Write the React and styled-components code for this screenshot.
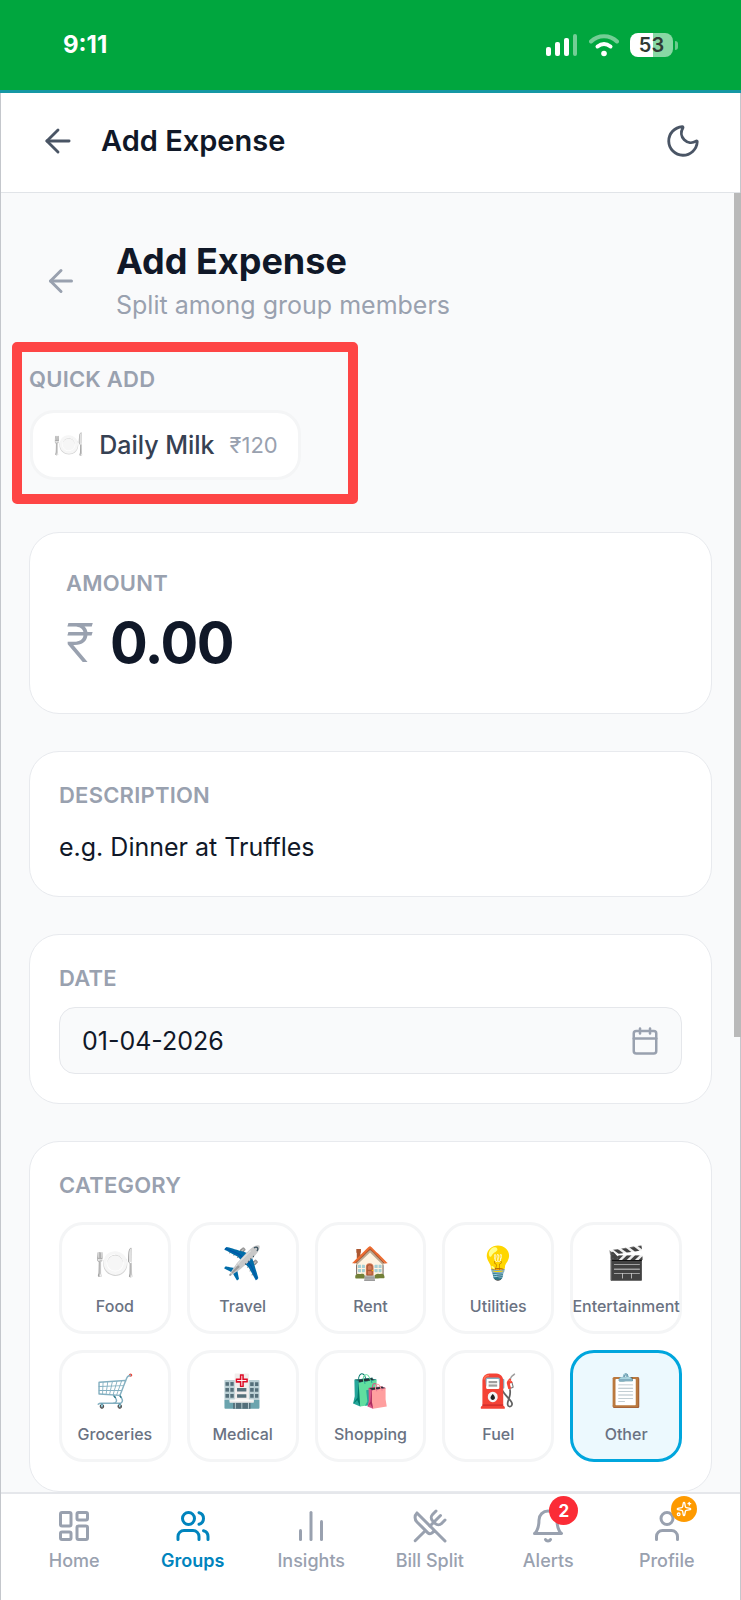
import React, { useState } from "react";
import styled, { createGlobalStyle, css } from "styled-components";
import {
  ArrowLeft,
  Calendar,
  ChartNoAxesColumn,
  LayoutDashboard,
  Moon,
  Sparkles,
  User,
  Users,
  UtensilsCrossed,
} from "lucide-react";

const GlobalStyle = createGlobalStyle`
  *, *::before, *::after { box-sizing: border-box; }
  body {
    margin: 0;
    background: #f9fafb;
    color: #101828;
    font-family: Inter, "Liberation Sans", sans-serif;
  }
  button, input { font: inherit; color: inherit; }
  h1, h2, p { margin: 0; }
`;

const Shell = styled.div`
  display: flex;
  flex-direction: column;
  min-height: 100vh;
  border: solid #c4c7cc;
  border-width: 0 1px;
`;

const StatusBar = styled.div`
  display: flex;
  align-items: center;
  justify-content: space-between;
  height: 93px;
  margin: 0 -1px;
  padding: 0 62px 0 63px;
  background: #00a63e;
  border-bottom: 3px solid #1598a4;
  color: #fff;
`;

const Clock = styled.span`
  font-size: 24px;
  font-weight: 700;
  line-height: 28px;
`;

const StatusIcons = styled.div`
  display: flex;
  align-items: center;
  gap: 11px;
`;

const Battery = styled.div`
  position: relative;
  width: 43px;
  height: 24px;
  margin-right: 6px;
  border-radius: 8px;
  background: linear-gradient(90deg, #fff 53%, #88d8a4 53%);
  color: #2f3a34;
  font-size: 20px;
  font-weight: 600;
  line-height: 24px;
  text-align: center;

  &::after {
    content: "";
    position: absolute;
    top: 8px;
    right: -5px;
    width: 3px;
    height: 9px;
    border-radius: 0 3px 3px 0;
    background: #6bcb8d;
  }
`;

const AppBar = styled.header`
  display: flex;
  align-items: center;
  gap: 24px;
  height: 100px;
  padding: 0 38px 4px;
  background: #fff;
  border-bottom: 1px solid #e1e4e8;
`;

const AppBarTitle = styled.h1`
  flex: 1;
  font-size: 29px;
  font-weight: 600;
  line-height: 36px;
`;

const IconButton = styled.button`
  display: flex;
  padding: 0;
  border: 0;
  background: none;
  color: ${(p) => (p.$muted ? "#99a1af" : "#4a5565")};
  cursor: pointer;
`;

const Main = styled.main`
  position: relative;
  flex: 1;
  padding: 48px 28px 0;
`;

const ScrollThumb = styled.div`
  position: absolute;
  top: 0;
  right: -1px;
  width: 7px;
  height: 65%;
  background: #b9b9b9;
`;

const PageHead = styled.div`
  display: flex;
  align-items: center;
  gap: 37px;
  padding: 0 14px;
`;

const PageTitle = styled.h2`
  font-size: 36px;
  font-weight: 700;
  line-height: 40px;
`;

const PageSubtitle = styled.p`
  padding-top: 8px;
  color: #99a1af;
  font-size: 25px;
  line-height: 32px;
`;

const QuickAdd = styled.section`
  position: relative;
  display: flex;
  flex-direction: column;
  align-items: flex-start;
  gap: 17px;
  margin: 44px 0 52px;
`;

const Highlight = styled.div`
  position: absolute;
  top: -23px;
  left: -17px;
  width: 346px;
  bottom: -24px;
  border: 10px solid #fe4545;
  border-radius: 5px;
  pointer-events: none;
`;

const labelStyle = css`
  display: block;
  color: #99a1af;
  font-size: 22px;
  font-weight: 600;
  line-height: 28px;
  letter-spacing: 0.01em;
  text-transform: uppercase;
`;

const FieldLabel = styled.label`
  ${labelStyle}
`;

const GroupLabel = styled.h2`
  ${labelStyle}
`;

const Chip = styled.button`
  display: flex;
  align-items: center;
  gap: 15px;
  height: 70px;
  margin-left: 1px;
  padding: 0 20px;
  border: 3px solid #f4f5f6;
  border-radius: 24px;
  background: #fff;
  cursor: pointer;
`;

const ChipName = styled.span`
  color: #364153;
  font-size: 25px;
  font-weight: 500;
`;

const ChipPrice = styled.span`
  color: #99a1af;
  font-size: 22px;
`;

const Emoji = styled.span`
  font-family: "Noto Color Emoji", sans-serif;
  font-size: ${(p) => p.$size}px;
  line-height: 40px;
`;

const Stack = styled.form`
  display: flex;
  flex-direction: column;
  gap: 37px;
`;

const Card = styled.section`
  padding: ${(p) => (p.$roomy ? "36px" : "29px")};
  border: 1px solid #e8eaee;
  border-radius: 30px;
  background: #fff;
`;

const AmountRow = styled.div`
  display: flex;
  align-items: center;
  gap: 16px;
  padding-top: 12px;
`;

const Currency = styled.span`
  color: #99a1af;
  font-size: 54px;
  font-weight: 300;
  line-height: 68px;
`;

const BareInput = styled.input`
  display: block;
  width: 100%;
  min-width: 0;
  padding: 0;
  border: 0;
  outline: 0;
  background: none;
  color: #101828;

  &::placeholder {
    color: #101828;
    opacity: 1;
  }
`;

const AmountInput = styled(BareInput)`
  height: 68px;
  font-size: 56px;
  font-weight: 700;
  letter-spacing: -0.025em;
`;

const TextInput = styled(BareInput)`
  height: 32px;
  font-size: 25px;
`;

const DescriptionInput = styled(TextInput)`
  margin-top: 22px;
  margin-bottom: 4px;
`;

const DateBox = styled.div`
  display: flex;
  align-items: center;
  height: 67px;
  margin-top: 15px;
  padding: 0 21px 0 22px;
  border: 1px solid #e5e7eb;
  border-radius: 16px;
  background: #f9fafb;
`;

const CategoryGrid = styled.div`
  display: grid;
  grid-template-columns: repeat(5, minmax(0, 1fr));
  gap: 16px;
  margin-top: 23px;
`;

const CategoryTile = styled.button`
  display: flex;
  flex-direction: column;
  align-items: center;
  justify-content: center;
  gap: 11px;
  aspect-ratio: 1;
  min-width: 0;
  padding: 5px 0 0;
  border: 3px solid ${(p) => (p.$active ? "#00a6dd" : "#f4f5f6")};
  border-radius: 24px;
  background: ${(p) => (p.$active ? "#ecf9fe" : "#fff")};
  color: #6a7282;
  font-size: 16px;
  font-weight: 500;
  line-height: 24px;
  white-space: nowrap;
  cursor: pointer;
`;

const TabBar = styled.nav`
  display: grid;
  grid-template-columns: repeat(6, 1fr);
  height: 108px;
  padding: 14px 14px 0;
  background: #fff;
  border-top: 2px solid #e5e7eb;
  position: relative;
`;

const Tab = styled.a`
  display: flex;
  flex-direction: column;
  align-items: center;
  gap: 3px;
  color: ${(p) => (p.$active ? "#0084bd" : "#99a1af")};
  font-size: 18px;
  font-weight: ${(p) => (p.$active ? 600 : 500)};
  line-height: 28px;
  text-decoration: none;
`;

const TabIcon = styled.span`
  position: relative;
  display: flex;
`;

const CountBadge = styled.span`
  position: absolute;
  top: -12px;
  right: -12px;
  display: flex;
  align-items: center;
  justify-content: center;
  width: 29px;
  height: 29px;
  border-radius: 50%;
  background: #fb2c36;
  color: #fff;
  font-size: 17px;
  font-weight: 700;
`;

const ProBadge = styled(CountBadge)`
  width: 26px;
  height: 26px;
  background: #fe9a00;
`;

function SignalIcon() {
  return (
    <svg width="32" height="24" viewBox="0 0 32 24" fill="#fff" aria-hidden="true">
      <rect x="0" y="14" width="5" height="9" rx="2" />
      <rect x="9" y="9" width="5" height="14" rx="2" />
      <rect x="18" y="5" width="5" height="18" rx="2" />
      <rect x="27" y="1" width="4" height="22" rx="2" opacity="0.45" />
    </svg>
  );
}

function WifiIcon() {
  return (
    <svg width="30" height="24" viewBox="0 0 30 24" fill="none" stroke="#fff" strokeWidth="4" aria-hidden="true">
      <path d="M2 8.5C9 1.4 21 1.4 28 8.5" strokeLinecap="round" opacity="0.45" />
      <path d="M8.500 13.500c4-3 9-3 13 0" strokeLinecap="round" strokeWidth="4" />
      <circle cx="15" cy="20.500" r="2.800" fill="#fff" stroke="none" />
    </svg>
  );
}

function BellIcon({ size, strokeWidth }) {
  return (
    <svg
      width={size}
      height={size}
      viewBox="0 0 24 24"
      fill="none"
      stroke="currentColor"
      strokeWidth={strokeWidth}
      strokeLinecap="round"
      strokeLinejoin="round"
      aria-hidden="true"
    >
      <path d="M6 8a6 6 0 0 1 12 0c0 7 3 9 3 9H3s3-2 3-9" />
      <path d="M10.3 21a1.94 1.94 0 0 0 3.4 0" />
    </svg>
  );
}

const CATEGORIES = [
  ["Food", "🍽️"],
  ["Travel", "✈️"],
  ["Rent", "🏠"],
  ["Utilities", "💡"],
  ["Entertainment", "🎬"],
  ["Groceries", "🛒"],
  ["Medical", "🏥"],
  ["Shopping", "🛍️"],
  ["Fuel", "⛽"],
  ["Other", "📋"],
];

const TABS = [
  { name: "Home", Icon: LayoutDashboard },
  { name: "Groups", Icon: Users },
  { name: "Insights", Icon: ChartNoAxesColumn },
  { name: "Bill Split", Icon: UtensilsCrossed },
  { name: "Alerts", Icon: BellIcon, badge: <CountBadge>2</CountBadge> },
  {
    name: "Profile",
    Icon: User,
    badge: (
      <ProBadge>
        <Sparkles size={16} strokeWidth={2} />
      </ProBadge>
    ),
  },
];

export default function App() {
  const [category, setCategory] = useState("Other");

  return (
    <>
      <GlobalStyle />
      <Shell>
        <StatusBar>
          <Clock>9:11</Clock>
          <StatusIcons>
            <SignalIcon />
            <WifiIcon />
            <Battery>53</Battery>
          </StatusIcons>
        </StatusBar>
        <AppBar>
          <IconButton aria-label="Back">
            <ArrowLeft size={38} strokeWidth={1.8} />
          </IconButton>
          <AppBarTitle>Add Expense</AppBarTitle>
          <IconButton aria-label="Dark mode">
            <Moon size={38} strokeWidth={1.8} />
          </IconButton>
        </AppBar>
        <Main>
          <PageHead>
            <IconButton $muted aria-label="Back to group">
              <ArrowLeft size={36} strokeWidth={2} />
            </IconButton>
            <div>
              <PageTitle>Add Expense</PageTitle>
              <PageSubtitle>Split among group members</PageSubtitle>
            </div>
          </PageHead>
          <QuickAdd>
            <GroupLabel>Quick add</GroupLabel>
            <Chip>
              <Emoji $size={25}>🍽️</Emoji>
              <ChipName>Daily Milk</ChipName>
              <ChipPrice>₹120</ChipPrice>
            </Chip>
            <Highlight />
          </QuickAdd>
          <Stack>
            <Card $roomy>
              <FieldLabel htmlFor="amount">Amount</FieldLabel>
              <AmountRow>
                <Currency>₹</Currency>
                <AmountInput id="amount" inputMode="decimal" placeholder="0.00" />
              </AmountRow>
            </Card>
            <Card>
              <FieldLabel htmlFor="description">Description</FieldLabel>
              <DescriptionInput id="description" placeholder="e.g. Dinner at Truffles" />
            </Card>
            <Card>
              <FieldLabel htmlFor="date">Date</FieldLabel>
              <DateBox>
                <TextInput id="date" defaultValue="01-04-2026" />
                <IconButton type="button" $muted aria-label="Pick a date">
                  <Calendar size={30} strokeWidth={2} />
                </IconButton>
              </DateBox>
            </Card>
            <Card>
              <GroupLabel>Category</GroupLabel>
              <CategoryGrid>
                {CATEGORIES.map(([name, emoji]) => (
                  <CategoryTile
                    key={name}
                    type="button"
                    $active={name === category}
                    aria-pressed={name === category}
                    onClick={() => setCategory(name)}
                  >
                    <Emoji $size={32}>{emoji}</Emoji>
                    <span>{name}</span>
                  </CategoryTile>
                ))}
              </CategoryGrid>
            </Card>
          </Stack>
          <ScrollThumb />
        </Main>
        <TabBar>
          {TABS.map(({ name, Icon, badge }) => (
            <Tab key={name} href="#" $active={name === "Groups"}>
              <TabIcon>
                <Icon size={36} strokeWidth={2} />
                {badge}
              </TabIcon>
              {name}
            </Tab>
          ))}
        </TabBar>
      </Shell>
    </>
  );
}
